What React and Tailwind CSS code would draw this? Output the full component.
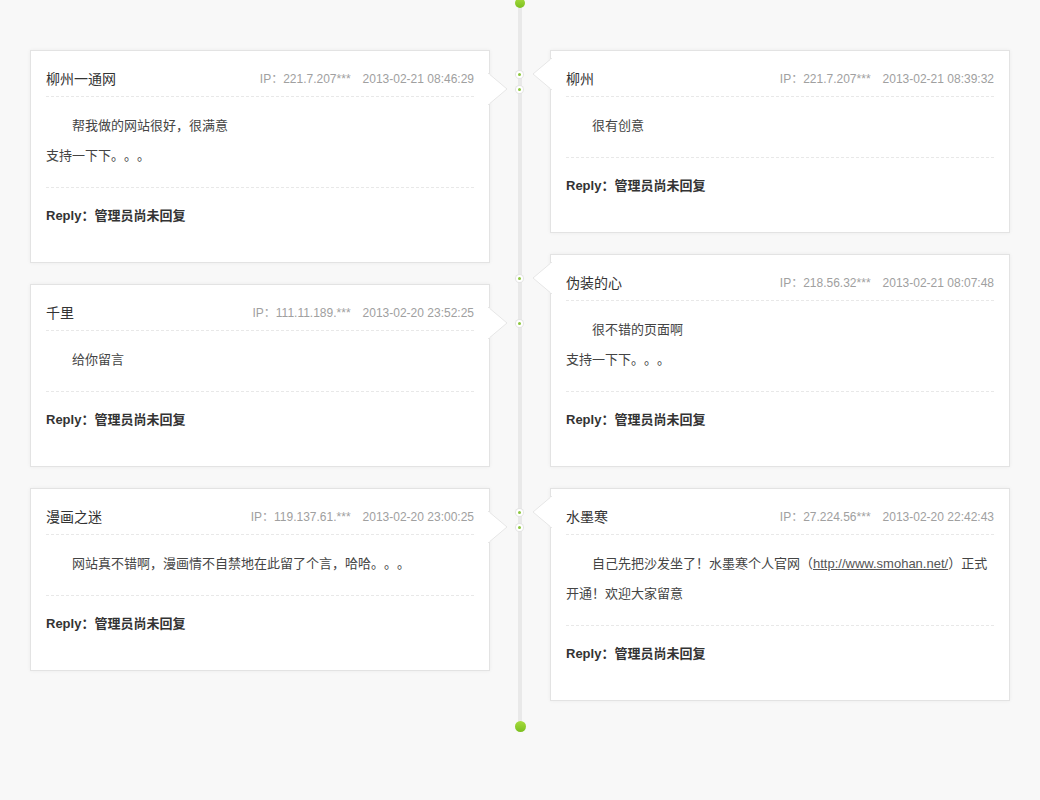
import React from 'react'

const leftList = [
    {
        name: '柳州一通网',
        ip: '221.7.207***',
        time: '2013-02-21 08:46:29',
        lines: [<p key="a" className="indent-[2em]">帮我做的网站很好，很满意</p>, <p key="b">支持一下下。。。</p>],
    },
    {
        name: '千里',
        ip: '111.11.189.***',
        time: '2013-02-20 23:52:25',
        lines: [<p key="a" className="indent-[2em]">给你留言</p>],
    },
    {
        name: '漫画之迷',
        ip: '119.137.61.***',
        time: '2013-02-20 23:00:25',
        lines: [<p key="a" className="indent-[2em]">网站真不错啊，漫画情不自禁地在此留了个言，哈哈。。。</p>],
    },
]

const rightList = [
    {
        name: '柳州',
        ip: '221.7.207***',
        time: '2013-02-21 08:39:32',
        lines: [<p key="a" className="indent-[2em]">很有创意</p>],
    },
    {
        name: '伪装的心',
        ip: '218.56.32***',
        time: '2013-02-21 08:07:48',
        lines: [<p key="a" className="indent-[2em]">很不错的页面啊</p>, <p key="b">支持一下下。。。</p>],
    },
    {
        name: '水墨寒',
        ip: '27.224.56***',
        time: '2013-02-20 22:42:43',
        lines: [
            <p key="a" className="indent-[2em]">
                自己先把沙发坐了！水墨寒个人官网（<a className="underline text-[#555]">http://www.smohan.net/</a>）正式开通！欢迎大家留意
            </p>,
        ],
    },
]

function Dot() {
    return (
        <span className="block w-[7px] h-[7px] rounded-full bg-[#8cc63f] border-2 border-white shadow-[0_0_0_1px_#e4e4e4]" />
    )
}

function Card({ item, side }) {
    const left = side === 'left'
    return (
        <div className="relative bg-white border border-[#e3e3e3] shadow-[0_0_4px_rgba(0,0,0,0.05)] px-[15px]">

            {/* arrow + dot toward the timeline */}
            {left ? (
                <>
                    <svg className="absolute -right-[20px] top-[22px]" width="21" height="32" viewBox="0 0 21 32">
                        <path d="M0 0 L19 16 L0 32" fill="#fff" stroke="#e6e6e6" strokeWidth="1" />
                        <rect x="0" y="1" width="1.5" height="30" fill="#fff" />
                    </svg>
                    <span className="absolute -right-[34px] top-[35px]"><Dot /></span>
                </>
            ) : (
                <>
                    <svg className="absolute -left-[20px] top-[7px]" width="21" height="32" viewBox="0 0 21 32">
                        <path d="M21 0 L2 16 L21 32" fill="#fff" stroke="#e6e6e6" strokeWidth="1" />
                        <rect x="19.5" y="1" width="1.5" height="30" fill="#fff" />
                    </svg>
                    <span className="absolute -left-[35px] top-[20px]"><Dot /></span>
                </>
            )}

            {/* Header */}
            <div className="flex items-center justify-between pt-[16px] pb-[5px] leading-[24px] border-b border-dashed border-[#e8e8e8]">
                <span className="text-[14px] text-[#333]">{item.name}</span>
                <span className="text-[12px] text-[#a0a0a0]">
                    IP：{item.ip}<span className="ml-[12px]">{item.time}</span>
                </span>
            </div>

            {/* Content */}
            <div className="pt-[14px] pb-[16px] text-[13px] leading-[30px] text-[#444] border-b border-dashed border-[#e8e8e8]">
                {item.lines}
            </div>

            {/* Reply */}
            <div className="pt-[13px] pb-[31px] leading-[30px] text-[13px] font-bold text-[#333]">
                Reply：管理员尚未回复
            </div>
        </div>
    )
}

export default function App() {
    return (
        <div
            className="min-h-[800px] bg-[#f8f8f8] flex justify-center items-start [text-spacing-trim:space-all]"
            style={{ fontFamily: '"Liberation Sans", "Noto Sans CJK SC", sans-serif' }}
        >
            <div className="flex w-[980px]">

                {/* LEFT column */}
                <div className="w-[460px] flex flex-col gap-[21px] pt-[50px] pb-[31px]">
                    {leftList.map((item, i) => <Card key={i} item={item} side="left" />)}
                </div>

                {/* Timeline */}
                <div className="w-[60px] flex flex-col items-center">
                    <span className="block w-[10px] h-[10px] rounded-full bg-gradient-to-b from-[#a6dc3c] to-[#7bbf1f] -mt-[2px] z-10" />
                    <span className="block w-[4px] flex-1 bg-[#e9e9e9] -my-[2px]" />
                    <span className="block w-[11px] h-[11px] rounded-full bg-gradient-to-b from-[#a6dc3c] to-[#7bbf1f] z-10" />
                </div>

                {/* RIGHT column */}
                <div className="w-[460px] flex flex-col gap-[21px] pt-[50px] pb-[31px]">
                    {rightList.map((item, i) => <Card key={i} item={item} side="right" />)}
                </div>

            </div>
        </div>
    )
}
